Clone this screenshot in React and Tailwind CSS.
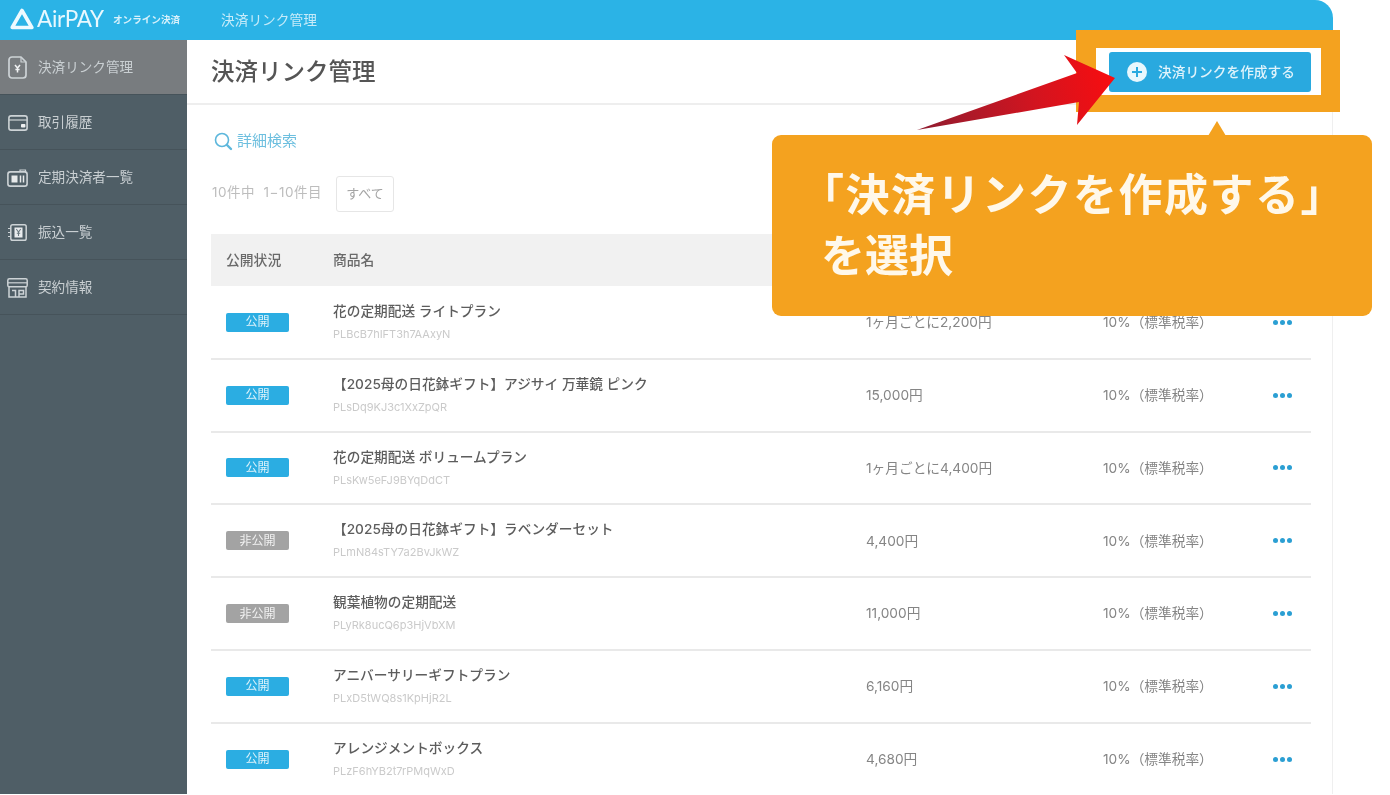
import React from "react";

const jp = "font-['Inter','Noto_Sans_CJK_JP',sans-serif]";
const ic = "#cdd3d6";

const IconDoc = () => (
  <svg width="19" height="23" viewBox="0 0 19 23" fill="none" stroke={ic} strokeWidth="1.7" strokeLinejoin="round">
    <path d="M4 1h9l5 5v13a3 3 0 0 1-3 3H4a3 3 0 0 1-3-3V4a3 3 0 0 1 3-3z" />
    <path d="M13 1v5h5" strokeWidth="1.2" />
    <path d="M7 9l2.5 3L12 9M9.5 12v4.5M7.4 13.5h4.2" stroke="#f1f3f4" strokeWidth="1.5" />
  </svg>
);
const IconCard = () => (
  <svg width="20" height="16" viewBox="0 0 20 16" fill="none" stroke={ic} strokeWidth="1.6">
    <rect x="0.9" y="0.9" width="18.2" height="14.2" rx="2.2" />
    <path d="M0.9 5h18.2" strokeWidth="1.2" />
    <rect x="13" y="9" width="4.4" height="3.6" rx="0.8" fill="#eef0f1" stroke="none" />
  </svg>
);
const IconSub = () => (
  <svg width="21" height="18" viewBox="0 0 21 18" fill="none" stroke={ic} strokeWidth="1.6">
    <rect x="0.9" y="2.9" width="19.2" height="14.2" rx="2.4" />
    <path d="M13 2.9V1h5.5v1.9" strokeWidth="1.2" />
    <rect x="4.5" y="6.5" width="6" height="7" fill="#e6e9ea" stroke="none" />
    <path d="M13.5 6.5v7M16.5 6.5v7" stroke="#e6e9ea" strokeWidth="1.5" />
  </svg>
);
const IconYen = () => (
  <svg width="19" height="17" viewBox="0 0 19 17" fill="none" stroke={ic} strokeWidth="1.5">
    <rect x="2.8" y="0.8" width="15.4" height="15.4" rx="1.8" />
    <rect x="6.5" y="3.5" width="8" height="10" fill="#e9ecee" stroke="none" />
    <path d="M8.3 5l2.2 3 2.2-3M10.5 8v4M8.8 9.3h3.4" stroke="#6c7a81" strokeWidth="1.1" />
    <path d="M0 4.5h3M0 8.5h3M0 12.5h3" strokeWidth="1.2" />
  </svg>
);
const IconShop = () => (
  <svg width="21" height="20" viewBox="0 0 21 20" fill="none" stroke={ic} strokeWidth="1.5">
    <rect x="0.8" y="0.8" width="19.4" height="8" rx="1.6" />
    <path d="M0.8 4.8h19.4" strokeWidth="1.2" />
    <path d="M2 8.8V19h17V8.8" />
    <path d="M5 12.5h3.5V19M12 19v-6.5h4.5V16H12" strokeWidth="1.5" />
  </svg>
);

const nav = [
  ["決済リンク管理", IconDoc, true],
  ["取引履歴", IconCard],
  ["定期決済者一覧", IconSub],
  ["振込一覧", IconYen],
  ["契約情報", IconShop],
];

const rows = [
  [true, "花の定期配送 ライトプラン", "PLBcB7hIFT3h7AAxyN", "1ヶ月ごとに2,200円"],
  [true, "【2025母の日花鉢ギフト】アジサイ 万華鏡 ピンク", "PLsDq9KJ3c1XxZpQR", "15,000円"],
  [true, "花の定期配送 ボリュームプラン", "PLsKw5eFJ9BYqDdCT", "1ヶ月ごとに4,400円"],
  [false, "【2025母の日花鉢ギフト】ラベンダーセット", "PLmN84sTY7a2BvJkWZ", "4,400円"],
  [false, "観葉植物の定期配送", "PLyRk8ucQ6p3HjVbXM", "11,000円"],
  [true, "アニバーサリーギフトプラン", "PLxD5tWQ8s1KpHjR2L", "6,160円"],
  [true, "アレンジメントボックス", "PLzF6hYB2t7rPMqWxD", "4,680円"],
];

function Row({ pub, name, id, price }) {
  return (
    <div className="grid h-[72.8px] shrink-0 grid-cols-[122px_533px_237px_170px_1fr] border-b-2 border-[#e9e9e9] text-[#858585]">
      <div className="flex items-center pl-[15px]">
        <span className={`flex h-[19px] w-[63px] items-center justify-center rounded-[2px] text-[12px] text-white/85 ${pub ? "bg-[#2bade2]" : "bg-[#a3a3a3]"}`}>
          {pub ? "公開" : "非公開"}
        </span>
      </div>
      <div className="flex flex-col pt-[14px]">
        <div className="text-[13.7px] leading-[20px] font-medium text-[#5d5d5d]">{name}</div>
        <div className="mt-[6px] text-[11px] leading-[14px] text-[#cacaca]">{id}</div>
      </div>
      <div className="flex items-center text-[13.7px]">{price}</div>
      <div className="flex items-center text-[13.7px]">10%（標準税率）</div>
      <div className="flex items-center gap-[2px]">
        <i className="size-[5px] rounded-full bg-[#2b9fd3]" />
        <i className="size-[5px] rounded-full bg-[#2b9fd3]" />
        <i className="size-[5px] rounded-full bg-[#2b9fd3]" />
      </div>
    </div>
  );
}

export default function App() {
  return (
    <div className={`relative h-[795px] w-[1390px] overflow-hidden bg-white blur-[0.7px] ${jp}`}>
      <div className="flex h-[794px] w-[1333px] flex-col">
        <header className="flex h-[40px] shrink-0 items-center rounded-tr-[18px] bg-[#2bb3e6] pl-[10px] text-white">
          <svg className="mb-[3px]" width="24" height="22" viewBox="0 0 24 22" fill="none" stroke="#eefaff" strokeWidth="3.6" strokeLinejoin="round">
            <path d="M12 2.5L21.8 19.5H2.2z" />
          </svg>
          <span className="ml-[3px] mb-[2px] w-[72px] text-[22.5px] leading-none font-normal tracking-[-0.3px] text-[#e8f8fe] font-['Lato',sans-serif]">AirPAY</span>
          <span className="ml-[4px] w-[73px] text-[9.6px] font-bold text-[#d8f1fb]">オンライン決済</span>
          <span className="ml-[35px] text-[13.7px] text-[#c6ebf9]">決済リンク管理</span>
        </header>
        <div className="flex min-h-0 flex-1">
          <aside className="flex w-[187px] shrink-0 flex-col bg-[#4f5e66]">
            {nav.map(([label, Icon, active]) => (
              <div
                key={label}
                className={`flex h-[55px] items-center border-b border-[#46535a] pt-[1px] ${active ? "bg-[#787c7f]" : ""}`}
              >
                <span className="flex w-[38px] justify-center pr-[3px]"><Icon /></span>
                <span className="text-[13.6px] text-[#c9cfd2]">{label}</span>
              </div>
            ))}
          </aside>
          <main className="flex min-w-0 flex-1 flex-col border-r border-[#efefef]">
            <div className="flex h-[65px] shrink-0 items-center border-b-2 border-[#eeeeee] pl-[24px] text-[23.5px] font-medium text-[#555]">
              決済リンク管理
            </div>
            <div className="pl-[24px] pr-[21px]">
              <div className="mt-[26px] flex h-[20px] items-center gap-[4px] pl-[2px] text-[15px] text-[#6dbfdf]">
                <svg width="20" height="20" viewBox="0 0 20 20" fill="none" stroke="#5db7dc" strokeWidth="1.6" strokeLinecap="round">
                  <circle cx="9" cy="9" r="6.5" />
                  <path d="M14 14l4 4" strokeWidth="2.4" />
                </svg>
                詳細検索
              </div>
              <div className="mt-[25px] flex h-[36px] items-center text-[13.5px] text-[#bdbdbd]">
                <span className="w-[125px] pb-[4px] pl-[1px] tracking-[0.5px] whitespace-nowrap">10件中&nbsp; 1−10件目</span>
                <span className="flex h-[36px] w-[58px] items-center justify-center rounded-[3px] border border-[#e6e6e6] text-[13px] text-[#a5a5a5]">すべて</span>
              </div>
              <div className="mt-[22px] grid h-[52px] grid-cols-[122px_1fr] items-center bg-[#f1f1f1] text-[13.8px] font-medium text-[#6a6a6a]">
                <span className="pl-[15px]">公開状況</span>
                <span>商品名</span>
              </div>
              <div className="pt-[1px]">
                {rows.map((r) => (
                  <Row key={r[2]} pub={r[0]} name={r[1]} id={r[2]} price={r[3]} />
                ))}
              </div>
            </div>
          </main>
        </div>
      </div>

      {/* highlight around the button */}
      <div className="absolute top-[30px] left-[1076px] flex h-[82px] w-[264px] items-start bg-[#f4a21f] pt-[18px] pl-[20px]">
        <div className="flex h-[47px] w-[225px] items-start bg-white pt-[4px] pl-[13px]">
          <div className="flex h-[40px] w-[202px] items-center gap-[11px] rounded-[3px] bg-[#29a9df] pl-[18px] text-[13.7px] font-medium whitespace-nowrap text-[#dff3fb]">
            <svg width="20" height="20" viewBox="0 0 20 20" className="shrink-0">
              <circle cx="10" cy="10" r="10" fill="#e8f7fd" />
              <path d="M10 5v10M5 10h10" stroke="#29a9df" strokeWidth="2" />
            </svg>
            決済リンクを作成する
          </div>
        </div>
      </div>

      {/* callout */}
      <svg className="absolute top-[121px] left-[1200px]" width="34" height="15" viewBox="0 0 34 15">
        <path d="M17 0L26 15H8z" fill="#f4a21f" />
      </svg>
      <div className="absolute top-[135px] left-[772px] h-[181px] w-[600px] rounded-[9px] bg-[#f4a21f] pt-[30px] pl-[49px] text-[44px] leading-[61px] font-bold text-[#fff8ea]">
        <div className="tracking-[1.5px] whitespace-nowrap"><span className="-ml-[21px]">「</span>決済リンクを作成する」</div>
        <div>を選択</div>
      </div>

      {/* arrow */}
      <svg className="absolute top-0 left-0" width="1390" height="140" viewBox="0 0 1390 140">
        <defs>
          <linearGradient id="arrow-fill" x1="917" y1="130" x2="1115" y2="78" gradientUnits="userSpaceOnUse">
            <stop offset="0" stopColor="#8e1c30" />
            <stop offset="0.6" stopColor="#d3141f" />
            <stop offset="1" stopColor="#f80d10" />
          </linearGradient>
        </defs>
        <path d="M917 130L1077 73L1064 55L1115 78L1077 125L1079 102z" fill="url(#arrow-fill)" />
      </svg>
    </div>
  );
}
